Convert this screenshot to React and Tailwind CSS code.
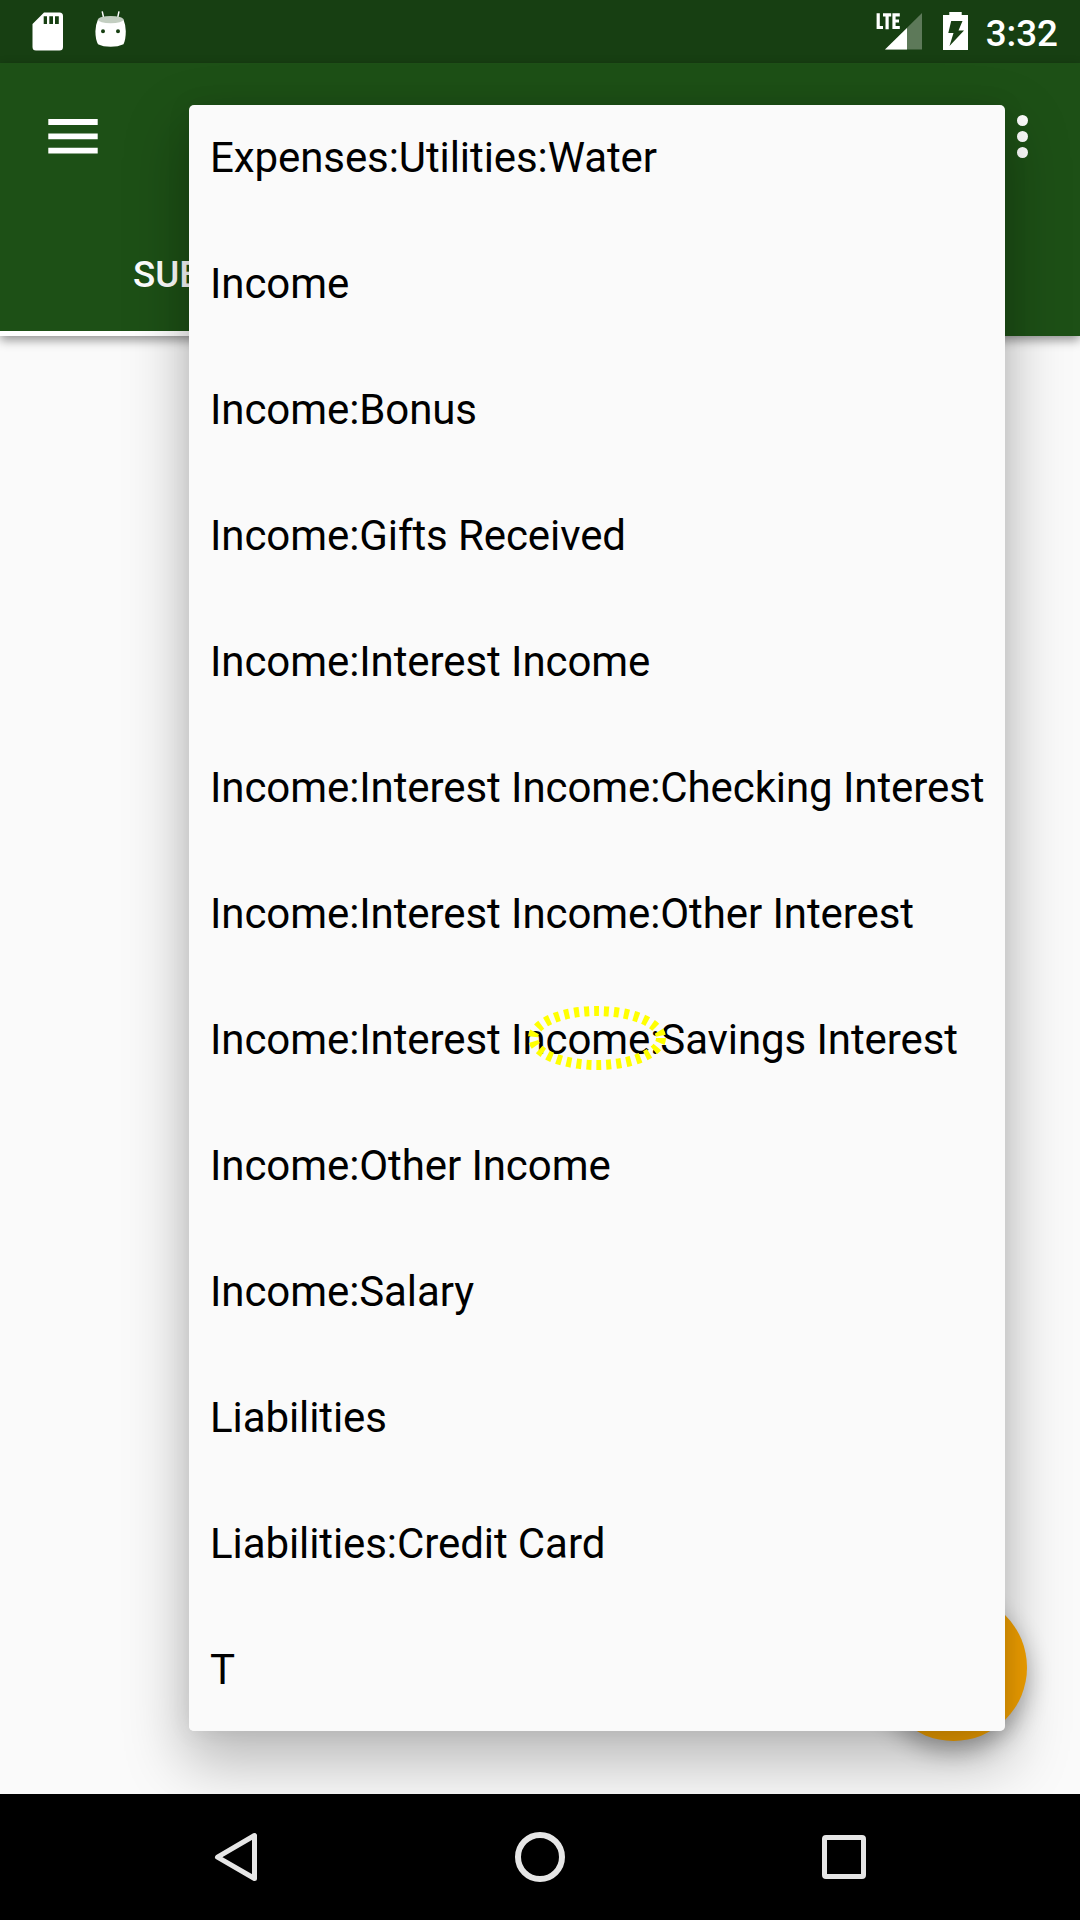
const accounts = [
  'Expenses:Utilities:Water',
  'Income',
  'Income:Bonus',
  'Income:Gifts Received',
  'Income:Interest Income',
  'Income:Interest Income:Checking Interest',
  'Income:Interest Income:Other Interest',
  'Income:Interest Income:Savings Interest',
  'Income:Other Income',
  'Income:Salary',
  'Liabilities',
  'Liabilities:Credit Card',
  'T',
];

function StatusBar() {
  return (
    <div className="flex h-[63px] items-start justify-between bg-[#173f12] text-white">
      <div className="flex pt-[11px] pl-8">
        <svg className="h-10 w-[31px]" viewBox="0 0 31 40" fill="currentColor">
          <path
            fillRule="evenodd"
            d="M12 1.5H27.5Q31 1.5 31 5V36Q31 39.5 27.5 39.5H4Q.5 39.5 .5 36V13ZM11.7 5.3V13H15V5.3ZM17.3 5.3V13H21V5.3ZM23 5.3V13H26.8V5.3Z"
          />
        </svg>
        <svg className="ml-8 h-10 w-8" viewBox="0 -0.3 32 40" fill="currentColor">
          <path d="M7.2 0 9 8M24 0 22.3 8" stroke="currentColor" strokeWidth="1.5" />
          <path
            fillRule="evenodd"
            d="M3 8Q15.7 14 28.4 8Q30.8 14 30.8 20Q30.8 28 28.5 33Q23 35.5 15.7 35.5Q8 35.5 3 33Q.4 28 .4 20Q.4 14 3 8ZM8 18A2 2 0 1 0 8 22A2 2 0 1 0 8 18ZM23 18A2 2 0 1 0 23 22A2 2 0 1 0 23 18Z"
          />
          <ellipse cx="15.7" cy="8.3" rx="12.7" ry="3.6" fill="#c3cec1" />
        </svg>
      </div>
      <div className="flex">
        <svg className="mt-[12px] h-[38px] w-[47px]" viewBox="0 0 47 38">
          <path d="M46 1V37.500H9Z" fill="#fff" fillOpacity=".3" />
          <path d="M31 16V37.500H9Z" fill="#fff" />
          <path
            d="M2.200 1.300V15.500H7M7 2.900H15.200M11.100 2.900V17.200M23.800 2.900H18V15.500H23.800M18 9H23"
            fill="none"
            stroke="#fff"
            strokeWidth="3.200"
          />
        </svg>
        <svg className="mt-[12px] ml-5 h-[38px] w-[25px]" viewBox="0 0 25 38" fill="currentColor">
          <path
            fillRule="evenodd"
            d="M6.300 0H18.700V3H25V38H0V3H6.300ZM8.200 9L5.300 21H10.500L6.500 34L21 18.500H15.500L19.500 9Z"
          />
        </svg>
        <span className="mt-[11px] mr-[22px] ml-[18px] text-[36.75px] leading-[46px] font-medium">3:32</span>
      </div>
    </div>
  );
}

function AppBar() {
  return (
    <header className="relative flex h-[273px] flex-col bg-[#1d5016] text-white shadow-[0_4px_10px_rgba(0,0,0,0.42)]">
      <div className="flex h-[147px] items-center justify-between pr-[52px] pl-12">
        <svg className="h-[36px] w-[50px]" viewBox="0 0 50 36" fill="currentColor">
          <path d="M.3 .1H49.700V5.900H.3ZM.3 14.400H49.700V20.200H.3ZM.3 28.700H49.700V34.500H.3Z" />
        </svg>
        <div className="flex flex-col gap-[5px]">
          <span className="size-[11px] rounded-full bg-white" />
          <span className="size-[11px] rounded-full bg-white" />
          <span className="size-[11px] rounded-full bg-white" />
        </div>
      </div>
      <nav className="flex h-[126px] w-1/2 items-center border-b-[5px] border-white pt-[8px] pl-[133px] text-[36.75px] font-medium">
        SUB
      </nav>
    </header>
  );
}

function AccountMenu() {
  return (
    <div className="absolute top-[105px] left-[189px] h-[1626px] w-[816px] rounded-[5px] shadow-[0_27px_60px_5px_rgba(0,0,0,0.26),0_0_24px_rgba(0,0,0,0.08)]">
      <ul className="flex h-full flex-col justify-end overflow-hidden rounded-[5px] bg-[#fafafa]">
        {accounts.map((name) => (
          <li
            key={name}
            className="flex h-[126px] shrink-0 items-center pt-[2px] pl-[21px] text-[42px] tracking-[-0.085px] whitespace-nowrap text-black"
          >
            {name}
          </li>
        ))}
      </ul>
      {/* Touch target highlight */}
      <svg className="absolute top-[896px] left-[333px] h-[74px] w-[150px]" viewBox="0 0 150 74">
        <ellipse cx="75" cy="37" rx="64" ry="27" fill="none" stroke="#ffff00" strokeWidth="10" strokeDasharray="5 5" />
      </svg>
    </div>
  );
}

function NavigationBar() {
  return (
    <footer className="relative z-10 flex h-[126px] items-center bg-black pl-[214px]">
      <svg className="h-[50px] w-[44px]" viewBox="0 0 44 50" fill="none" stroke="#e6e6e6" strokeWidth="5" strokeLinejoin="round">
        <path d="M40.500 3.500V46.500L3.500 25.200Z" />
      </svg>
      <div className="ml-[257px] size-[50px] rounded-full border-[6px] border-[#e6e6e6]" />
      <div className="ml-[257px] size-[44px] rounded-[4px] border-[5px] border-[#e6e6e6]" />
    </footer>
  );
}

export default function App() {
  return (
    <div className="relative flex h-[1920px] w-[1080px] flex-col overflow-hidden bg-[#fafafa] font-[Roboto,sans-serif]">
      <StatusBar />
      <AppBar />
      <main className="flex flex-1 items-end justify-end pr-[53px] pb-[53px]">
        <div className="size-[147px] rounded-full bg-[#f5a300] shadow-[0_10px_24px_rgba(0,0,0,0.32)]" />
      </main>
      <AccountMenu />
      <NavigationBar />
    </div>
  );
}
